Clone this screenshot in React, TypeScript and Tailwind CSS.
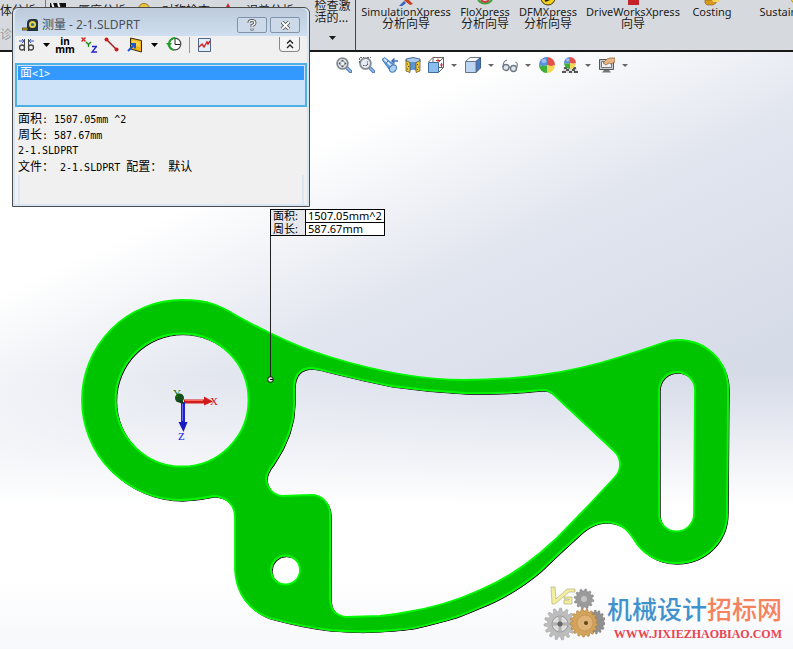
import React, { useState } from "react";

const OUTLINE =
    "M182 300 C194 300 204 301 213 304 C222 307 229 311 237 316 Q253 325 270 333 C286 341 310 351 330 357 C372 370 420 380 465 380 C492 380 517 378 541 375 Q583 369 620 357 Q643 350 665 342 Q671 340 678 340 C706 340 728 361 728 389 L727 513 C727 541 705 563 676 563 C655 563 641 551 635 541 C628 530 622 523 607 522 C599 522 592 524 583 531 Q572 541 560 552 L540 571 C522 586 501 599 480 607 Q457 618 433 623 Q414 629 393 630 Q362 633 330 630 C314 628 300 626 270 618 C249 611 236 593 235 570 L235 517 C235 504 225 496 213 496 Q200 499 182 500 A100 100 0 0 1 182 300 Z";

const HOLES = [
    "M115.500 400 A66.500 66.500 0 0 1 248.500 400 A66.500 66.500 0 0 1 115.500 400 Z",
    "M294 388 C294 374 301 368 312 368 Q320 369 330 372 Q362 380 392 386 Q428 391 465 393 Q505 394 540 390 Q547 389 552 393 L613 450 Q620 456 620 464 Q620 472 615 477 L587 507 L557 538 L540 553 C522 568 502 581 480 590 C456 601 432 608 407 612 Q394 615 380 616 L346 617 Q331 615 330 600 L330 515 C330 503 322 495 311 495 L282 496 C272 495 267 487 266 479 Q266 473 273 464 Q294 433 294 403 Z",
    "M659 390 A18 18 0 0 1 695 390 L694 514 A17.500 17.500 0 0 1 659 514 Z",
    "M271 570 A14.500 14.500 0 0 1 300 570 A14.500 14.500 0 0 1 271 570 Z",
];

const PLATE = [OUTLINE, ...HOLES].join(" ");

function gearPath(cx: number, cy: number, outer: number, inner: number, teeth: number) {
    const points: string[] = [];
    for (let i = 0; i < teeth; i++) {
        const step = (Math.PI * 2) / teeth;
        const base = i * step;
        [[0, inner], [0.2, outer], [0.5, outer], [0.7, inner]].forEach(([offset, radius]) => {
            const angle = base + offset * step;
            points.push(`${(cx + Math.cos(angle) * radius).toFixed(2)} ${(cy + Math.sin(angle) * radius).toFixed(2)}`);
        });
    }
    return `M${points.join(" L")} Z`;
}

function Caret({ className = "" }: { className?: string }) {
    return (
        <svg viewBox="0 0 7 4" className={`w-[7px] h-1 shrink-0 ${className}`}>
            <path d="M0 0h7L3.5 4z" fill="currentColor" />
        </svg>
    );
}

/* ── Ribbon ── */

const sliver: Record<string, React.ReactNode> = {
    sim: (
        <>
            <path d="M1 6l5-5 2 2-5 4z" fill="#2f62c4" />
            <path d="M6 0h5l4 4-3 1-4-3z" fill="#c8401f" />
        </>
    ),
    flo: (
        <>
            <path d="M1 0q7 7 14 0" fill="none" stroke="#3aa53a" strokeWidth="2" />
            <path d="M4 0q4 4 8 0" fill="none" stroke="#d23b3b" strokeWidth="2" />
        </>
    ),
    dfm: (
        <>
            <circle cx="8" cy="-2" r="7" fill="#f2d21c" stroke="#3a3210" />
            <path d="M5 1l5-2" stroke="#222" strokeWidth="2" />
        </>
    ),
    works: <path d="M3 0h11v5H3z" fill="#c4232c" />,
    cost: (
        <>
            <path d="M1 0h11v3l-3 2H3L1 3z" fill="#d79a1c" stroke="#8b5a08" strokeWidth=".6" />
            <path d="M8 0h7v2H9z" fill="#f5cf59" />
        </>
    ),
    sun: <circle cx="11" cy="-2" r="6" fill="#f5dc35" stroke="#b08d18" />,
};

const experts = [
    { icon: "sim", title: "SimulationXpress", subtitle: "分析向导", width: "w-[98px]" },
    { icon: "flo", title: "FloXpress", subtitle: "分析向导", width: "w-[56px]" },
    { icon: "dfm", title: "DFMXpress", subtitle: "分析向导", width: "w-[66px]" },
    { icon: "works", title: "DriveWorksXpress", subtitle: "向导", width: "w-[100px]" },
    { icon: "cost", title: "Costing", width: "w-[54px]" },
    { icon: "sun", title: "Sustainability", width: "w-[106px]" },
];

function Ribbon() {
    return (
        <header className="flex h-[52px] overflow-hidden border-b-2 border-[#1a1a1a] bg-[#d6dadf] text-xs leading-3 text-[#1c1c1c]">
            <div className="w-[46px] shrink-0 border-r border-[#777] pt-[5px] whitespace-nowrap overflow-hidden">
                <div>体分析</div>
                <div className="mt-3 text-[#9b9b9b]">诊断</div>
            </div>
            <div className="flex w-[264px] shrink-0 items-start gap-3 overflow-hidden pt-[3px] pl-1 whitespace-nowrap">
                <svg viewBox="0 0 16 12" className="w-4 h-3 shrink-0">
                    <path d="M0 0h16v12H0z" fill="#111" />
                    <path d="M2 0l4 12M8 0l4 12" stroke="#fff" strokeWidth="2" />
                </svg>
                <span className="pt-[2px]">厚度分析</span>
                <svg viewBox="0 0 12 12" className="w-3 h-3 shrink-0">
                    <circle cx="6" cy="6" r="5.5" fill="#eec643" stroke="#9a7514" />
                </svg>
                <span className="pt-[2px]">对称检查</span>
                <svg viewBox="0 0 12 12" className="w-3 h-3 shrink-0">
                    <path d="M6 0l2 4 4 1-4 2-2 5-2-5-4-2 4-1z" fill="#d2202a" />
                </svg>
                <span className="pt-[2px]">误差分析</span>
            </div>
            <button className="flex w-[46px] shrink-0 flex-col items-center border-r border-[#444] text-left">
                <span>
                    检查激
                    <br />
                    活的...
                </span>
                <Caret className="mt-3" />
            </button>
            {experts.map(expert => (
                <button key={expert.icon} className={`flex ${expert.width} shrink-0 flex-col items-center mx-px whitespace-nowrap`}>
                    <svg viewBox="0 0 16 6" className="w-4 h-[6px] shrink-0">
                        {sliver[expert.icon]}
                    </svg>
                    <span className="text-[11px] leading-3">{expert.title}</span>
                    {expert.subtitle && <span>{expert.subtitle}</span>}
                </button>
            ))}
        </header>
    );
}

/* ── Heads-up view toolbar ── */

function Lens({ area = false }: { area?: boolean }) {
    return (
        <>
            <path d="M10.500 10.500l4 4" stroke="#4672b4" strokeWidth="3.400" strokeLinecap="round" />
            <path d="M10.500 10.500l4 4" stroke="#9cc4ef" strokeWidth="1.500" strokeLinecap="round" />
            <circle cx="6.500" cy="6.500" r="5.400" fill="#e7edf3" stroke="#858b92" strokeWidth="1.800" />
            {area ? (
                <>
                    <path d="M.5 6V.5H5M8 .5h4" fill="none" stroke="#666" strokeDasharray="2 1" />
                    <path d="M4 8.500h4.500V4.500" fill="none" stroke="#555" strokeWidth="1.200" strokeDasharray="1.500 1" />
                </>
            ) : (
                <path d="M6.500 2.500l2 2h-4zM6.500 10.500l2-2h-4zM2.500 6.500l2-2v4zM10.500 6.500l-2-2v4z" fill="#555" />
            )}
        </>
    );
}

function Sphere({ r = 8, cx = 8, cy = 8 }: { r?: number; cx?: number; cy?: number }) {
    return (
        <g transform={`translate(${cx} ${cy}) scale(${r / 8})`}>
            <path d="M0 0V-8A8 8 0 0 0-8 0Q-4 2 0 0z" fill="#5791de" />
            <path d="M0 0V-8A8 8 0 0 1 8 0Q4 2 0 0z" fill="#e2524b" />
            <path d="M0 0Q-4 2-8 0A8 8 0 0 0 0 8z" fill="#3fae3b" />
            <path d="M0 0Q4 2 8 0A8 8 0 0 1 0 8z" fill="#f2d65a" />
            <ellipse cx="-3" cy="-4" rx="2.500" ry="2" fill="#fff" opacity=".45" />
        </g>
    );
}

const viewTools = [
    { name: "整屏显示全图", art: <Lens /> },
    { name: "局部放大", art: <Lens area /> },
    {
        name: "上一视图",
        art: (
            <>
                <path d="M0 2.500L2.500 .5l9.500 7-4 6z" fill="#5f9ce0" stroke="#356ca9" strokeWidth=".8" />
                <path d="M2 2l8 7.500" stroke="#d9ecff" strokeWidth="1.800" />
                <path d="M4 6.500l2.500-3" stroke="#356ca9" />
                <ellipse cx="11" cy="11.500" rx="4" ry="3.200" fill="#a9d0f5" stroke="#3f6fa6" transform="rotate(-50 11 11.500)" />
                <path d="M16 4h-5M12.500 1.500L10 4l2.500 2.500" fill="none" stroke="#3b6dc0" strokeWidth="1.500" />
            </>
        ),
    },
    {
        name: "剖面视图",
        art: (
            <>
                <path d="M1 2q7-3 14 0v3l-4 1q-3-1-6 0L1 4.500z" fill="#a9ccf0" stroke="#2b4c78" strokeWidth=".8" />
                <path d="M5 5.500q3-1 6 0v8q-3-1.500-6 0z" fill="#5b93d4" />
                <path d="M1 3.500l4 2v10l-4-1.500zM15 3.500l-4 2v10l4-1.500z" fill="#f3ca3a" stroke="#4a4a2a" strokeWidth=".7" />
                <path d="M2 7h1M3 9.500h1M2 12h1M12 7.500h1M13 10h1M12 12.500h1" stroke="#5a4a10" />
            </>
        ),
    },
    {
        name: "视图定向",
        caret: true,
        art: (
            <>
                <path d="M5 .5h10.500v10L11 15M5 .5L.5 5M15.500 .5L11 5M5 5V.5M11 10.500h4.500" fill="none" stroke="#555" strokeWidth=".9" />
                <path d="M.5 5.500h10v10H.5z" fill="#8bbcec" stroke="#3d6da5" />
                <path d="M10 1.500v4M8 3.500h4M13.500 6v4M12 8h3" stroke="#d03030" />
            </>
        ),
    },
    {
        name: "显示样式",
        caret: true,
        art: (
            <>
                <path d="M.5 4.500L5 .5h10.500L11 4.500z" fill="#fff" stroke="#66758a" />
                <path d="M11 4.500l4.500-4V11L11 15.500z" fill="#4778c4" stroke="#3c5b90" />
                <path d="M.5 4.500H11v11H.5z" fill="#bcd6f3" stroke="#66758a" />
            </>
        ),
    },
    {
        name: "隐藏/显示项目",
        caret: true,
        art: (
            <>
                <circle cx="4" cy="10.500" r="3" fill="#dbe6ee" stroke="#6d7780" strokeWidth="1.300" />
                <circle cx="11.500" cy="11.500" r="3" fill="#dbe6ee" stroke="#6d7780" strokeWidth="1.300" />
                <path d="M1 10q0-6 4-7M7 10.500q1-1 1.500 0M14.500 11q2-5-1-6" fill="none" stroke="#6d7780" strokeWidth="1.100" />
            </>
        ),
    },
    { name: "编辑外观", art: <Sphere /> },
    {
        name: "应用布景",
        caret: true,
        art: (
            <>
                <path d="M2 10h12l2 6H0z" fill="#ddd" />
                <path d="M2 10h3v2H2zM4 12h3v2H4zM10 12h3v2h-3zM0 14h4v2H0zM12 14h4v2h-4zM11 10h3v2h-3zM7 14h3v2H7z" fill="#555" />
                <Sphere r={6} cx={8} cy={6} />
            </>
        ),
    },
    {
        name: "视图设定",
        caret: true,
        art: (
            <>
                <path d="M.5 2.500h14v10H.5z" fill="#c9ced4" stroke="#555" />
                <path d="M2.500 4.500h10v6h-10z" fill="#eef2f5" stroke="#777" />
                <path d="M5 13h5l2 2.500H3z" fill="#777" />
                <path d="M4 6l4-4 3-1h5v4l-4 2-2-1-3 2z" fill="#e6b583" stroke="#8b5f34" strokeWidth=".7" />
            </>
        ),
    },
];

function ViewToolbar() {
    return (
        <div className="absolute top-[5px] left-[336px] flex items-center">
            {viewTools.map(tool => (
                <React.Fragment key={tool.name}>
                    <button aria-label={tool.name} className="mr-[7px] h-4 w-4 shrink-0">
                        <svg viewBox="0 0 16 16" className="w-4 h-4">
                            {tool.art}
                        </svg>
                    </button>
                    {tool.caret && (
                        <button aria-label={`${tool.name} 菜单`} className="mr-2 flex h-4 items-center text-[#666]">
                            <svg viewBox="0 0 6 3" className="w-[6px] h-[3px]">
                                <path d="M0 0h6L3 3z" fill="currentColor" />
                            </svg>
                        </button>
                    )}
                </React.Fragment>
            ))}
        </div>
    );
}

/* ── Part model ── */

function Model() {
    return (
        <svg viewBox="0 52 793 597" className="block w-full">
            <path d={PLATE} transform="translate(1.200 1.200)" fill="#111" stroke="#111" fillRule="evenodd" />
            <path d={PLATE} transform="translate(.500 .500)" fill="#8a8a8a" stroke="#8a8a8a" fillRule="evenodd" />
            <path d={PLATE} fill="#00c400" stroke="#00fa00" strokeWidth="1.800" strokeLinejoin="round" fillRule="evenodd" />

            {/* leader from the callout to the picked face */}
            <path d="M270.500 235V377" stroke="#222" />
            <circle cx="270.500" cy="379.500" r="2.800" fill="#e8e8e8" stroke="#111" />
            <path d="M270 379.500h3" stroke="#111" />

            {/* origin triad */}
            <path d="M184 401.500h21" stroke="#d01c1c" strokeWidth="4" />
            <path d="M204 396.500l9 5-9 4z" fill="#d01c1c" />
            <path d="M185 400.500h18" stroke="#ff6b5e" />
            <path d="M183 402v20" stroke="#2020cc" strokeWidth="4" />
            <path d="M178.500 422h9l-4 10z" fill="#1a1ac0" />
            <path d="M182.500 403v18" stroke="#6a6af5" />
            <circle cx="179.500" cy="398" r="4.500" fill="#15501a" />
            <path d="M178 400l5 1v3l-3-1z" fill="#123f18" />
            <g className="font-['Liberation_Serif',serif] text-[11px]">
                <text x="173" y="397" fill="#0a7a0a">Y</text>
                <text x="210" y="405" fill="#e01010">X</text>
                <text x="178" y="440" fill="#1010f0">Z</text>
            </g>
        </svg>
    );
}

function Callout() {
    return (
        <table className="absolute top-[157px] left-[270px] border-collapse border border-black bg-white font-['Noto_Sans','Noto_Sans_CJK_SC',sans-serif] text-[11px] leading-3 text-black">
            <tbody>
                <tr>
                    <th className="w-[35px] bg-[#e6e8ec] pl-[2px] text-left font-normal whitespace-nowrap">面积:</th>
                    <td className="w-[79px] border border-black pl-[2px]">1507.05mm^2</td>
                </tr>
                <tr>
                    <th className="bg-[#e6e8ec] pl-[2px] text-left font-normal whitespace-nowrap">周长:</th>
                    <td className="border border-black pl-[2px]">587.67mm</td>
                </tr>
            </tbody>
        </table>
    );
}

function Watermark() {
    return (
        <div className="absolute right-[11px] bottom-[7px] flex items-end gap-[2px]">
            <svg viewBox="0 0 62 56" className="w-[62px] h-14">
                <path d={gearPath(41, 13, 10, 8, 12)} fill="#9a9a9a" stroke="#7b7b7b" strokeWidth=".5" />
                <circle cx="41" cy="13" r="3" fill="#c4c4c4" />
                <path d={gearPath(51, 36, 12, 10, 14)} fill="#8f8f8f" stroke="#777" strokeWidth=".5" transform="translate(12 0) scale(.8 1)" />
                <path d={gearPath(17, 38, 16, 12.5, 15)} fill="#bdbdbd" stroke="#a2a2a2" strokeWidth=".6" />
                <circle cx="17" cy="38" r="8" fill="#dcdcdc" stroke="#999" />
                <path d="M17 30v16M9 38h16" stroke="#b0b0b0" strokeWidth="3" />
                <circle cx="17" cy="38" r="2.500" fill="#666" />
                <path d={gearPath(41, 37, 14, 12, 17)} fill="#d3a35c" stroke="#a87c3c" strokeWidth=".6" />
                <circle cx="42" cy="37" r="8" fill="#dfb375" stroke="#b98a49" strokeWidth=".6" />
                <circle cx="43" cy="37" r="2" fill="#604520" />
                <path d="M8 1h4l1 12L24 3h8v3h-6L12 18H9zM21 11h8v7h-8v-4h5v-1h-5z" fill="#f3eda0" stroke="#aaa676" strokeWidth=".6" />
            </svg>
            <div className="flex flex-col items-end">
                <div className="font-['Noto_Sans_CJK_SC',sans-serif] text-[25px] leading-9 font-medium text-[#3f92cd]">
                    机械设计<span className="text-[#f5825c]">招标网</span>
                </div>
                <a href="#" className="font-['Liberation_Serif',serif] text-xs leading-4 font-bold text-[#ea4350]">
                    WWW.JIXIEZHAOBIAO.COM
                </a>
            </div>
        </div>
    );
}

/* ── Measure dialog ── */

function MeasureDialog() {
    const [open, setOpen] = useState(true);
    const [expanded, setExpanded] = useState(true);

    if (!open) return null;

    return (
        <section
            aria-label="测量"
            className="absolute top-[7px] left-3 w-[298px] rounded-t-md border border-[#4b4b4b] bg-[#d8e5f3] px-[2px] pb-[2px]"
        >
            <div className="flex h-7 items-center rounded-t-md bg-linear-to-b from-[#bccada] to-[#cfdff0] pt-[6px] pr-[7px] pl-[7px]">
                <svg viewBox="0 0 16 12" className="mr-1 w-4 h-3">
                    <path d="M5 4q0-4 5-4h3q3 0 3 3v9H5z" fill="#26323a" />
                    <circle cx="10.500" cy="5.500" r="3.500" fill="#e5d44a" />
                    <circle cx="10.500" cy="5.500" r="1.600" fill="#2f6b87" />
                    <path d="M0 9h6v2H0z" fill="#d9b400" stroke="#222" strokeWidth=".7" />
                </svg>
                <h1 className="flex-1 text-xs text-[#4a4f55]">测量 - 2-1.SLDPRT</h1>
                <button aria-label="帮助" className="mr-[3px] flex h-4 w-[30px] items-center justify-center rounded-xs border border-[#8193aa] bg-[#cbd9e8]">
                    <svg viewBox="0 0 10 12" className="h-3 w-[10px]" fill="none">
                        <path d="M2 4q0-2.500 3-2.500T8 4Q8 5.500 5 6.500V8M5 9.500v2" stroke="#555" strokeWidth="3" />
                        <path d="M2 4q0-2.500 3-2.500T8 4Q8 5.500 5 6.500V8M5 9.500v1.500" stroke="#fff" strokeWidth="1.200" />
                    </svg>
                </button>
                <button aria-label="关闭" onClick={() => setOpen(false)} className="flex h-4 w-[30px] items-center justify-center rounded-xs border border-[#8193aa] bg-[#cbd9e8]">
                    <svg viewBox="0 0 11 9" className="w-[11px] h-[9px]">
                        <path d="M2 1l7 7M9 1L2 8" stroke="#555" strokeWidth="3.600" />
                        <path d="M2 1l7 7M9 1L2 8" stroke="#fff" strokeWidth="1.800" />
                    </svg>
                </button>
            </div>

            <div className="bg-[#f0f0f0]">
                <div className="flex h-[27px] items-start pt-px pr-[7px] pl-1">
                    <button aria-label="圆弧/圆测量" className="mr-2 h-4 w-4">
                        <svg viewBox="0 0 16 16" className="w-4 h-4">
                            <path d="M5.500 2v12M9.500 2v12" stroke="#444" />
                            <circle cx="3" cy="10.500" r="2.500" fill="none" stroke="#444" strokeWidth="1.300" />
                            <circle cx="12" cy="10.500" r="2.500" fill="none" stroke="#444" strokeWidth="1.300" />
                            <path d="M0 4h5M15 4h-5M3 2l2 2-2 2M12 2l-2 2 2 2" fill="none" stroke="#2f55d4" />
                        </svg>
                    </button>
                    <Caret className="mt-[6px]" />
                    <button aria-label="单位" className="ml-[7px] flex h-4 w-4 flex-col items-center text-[10px] leading-2 font-bold text-black">
                        <span>in</span>
                        <span>mm</span>
                    </button>
                    <button aria-label="显示 XYZ 测量" className="ml-2 h-4 w-4">
                        <svg viewBox="0 0 16 16" className="w-4 h-4" fill="none" strokeWidth="1.300">
                            <path d="M.5 .5l4 4M4.500 .5l-4 4" stroke="#d02020" />
                            <path d="M5 5l2.500 2.500L10 5M7.500 7.500V10" stroke="#168a16" />
                            <path d="M11 9.500h4.500L11 15h5" stroke="#2424c8" />
                        </svg>
                    </button>
                    <button aria-label="点到点" className="ml-[7px] h-4 w-4">
                        <svg viewBox="0 0 16 16" className="w-4 h-4">
                            <path d="M2 2l11 11" stroke="#a01818" strokeWidth="1.400" />
                            <circle cx="2.500" cy="2.500" r="2" fill="#d01a1a" />
                            <circle cx="12.500" cy="12.500" r="2" fill="#d01a1a" />
                        </svg>
                    </button>
                    <button aria-label="投影于" className="ml-[7px] h-4 w-4">
                        <svg viewBox="0 0 16 16" className="w-4 h-4">
                            <path d="M3.500 1l11 2.500v11.500L3.500 12z" fill="#f2b316" stroke="#3a2c05" />
                            <path d="M5 3l8 2v5L5 8z" fill="#fcd24d" />
                            <path d="M1 14l7-7M3.500 7h4.500v4.500" fill="none" stroke="#1c56c8" strokeWidth="2" />
                        </svg>
                    </button>
                    <Caret className="mt-[6px] ml-2" />
                    <button aria-label="测量历史记录" className="ml-2 h-4 w-4">
                        <svg viewBox="0 0 16 16" className="w-4 h-4">
                            <circle cx="9" cy="7" r="5.800" fill="#fff" stroke="#444" strokeWidth="1.200" />
                            <path d="M9 2v5.500h5" fill="none" stroke="#222" />
                            <path d="M9 1A6 6 0 0 0 3 7q0 5 5 6" fill="none" stroke="#1fa02a" strokeWidth="2" />
                            <path d="M0 6h6L3 10z" fill="#1fa02a" />
                        </svg>
                    </button>
                    <div className="mx-[7px] h-4 w-px bg-[#999]" />
                    <button aria-label="创建传感器" className="h-4 w-4">
                        <svg viewBox="0 0 16 16" className="w-4 h-4">
                            <path d="M1.500 1.500h12v13h-12z" fill="#e4eef8" stroke="#4d6688" />
                            <path d="M2 10l3-3 2 3 3-5 1 2 2-3" fill="none" stroke="#d8201c" strokeWidth="1.400" />
                        </svg>
                    </button>
                    <button
                        aria-label="展开/折叠"
                        onClick={() => setExpanded(!expanded)}
                        className="ml-auto flex h-[15px] w-[21px] items-center justify-center rounded-b-sm border border-t-0 border-[#888] bg-[#f4f4f4]"
                    >
                        <svg viewBox="0 0 8 10" className="w-2 h-[10px]">
                            <path d="M1 4.500l3-3 3 3M1 9l3-3 3 3" fill="none" stroke="#222" strokeWidth="1.300" />
                        </svg>
                    </button>
                </div>

                <ul className="h-11 border-2 border-[#4fb0e6] bg-[#cfe3f8] p-px">
                    <li className="h-[14px] bg-[#3399ff] pl-[2px] leading-[14px] text-white font-['DejaVu_Sans_Mono','Noto_Sans_CJK_SC',monospace] text-[10px]">
                        <span className="text-xs leading-[14px]">面</span>&lt;1&gt;
                    </li>
                </ul>

                {expanded && (
                    <div className="h-[97px] pt-1 pl-[3px] font-['DejaVu_Sans_Mono','Noto_Sans_CJK_SC',monospace] text-[10px] leading-4 whitespace-pre text-black">
                        <p className="h-4"><span className="text-xs leading-4">面积</span>: 1507.05mm ^2</p>
                        <p className="h-4"><span className="text-xs leading-4">周长</span>: 587.67mm</p>
                        <p className="h-4">2-1.SLDPRT</p>
                        <p className="h-4">
                            <span className="text-xs leading-4">文件：</span> 2-1.SLDPRT <span className="text-xs leading-4">配置：</span> <span className="text-xs leading-4">默认</span>
                        </p>
                        <div className="mr-[3px] h-[29px] border-x-2 border-[#dbe7f4]" />
                    </div>
                )}
            </div>
        </section>
    );
}

export default function App() {
    return (
        <div className="relative flex min-h-screen flex-col overflow-hidden bg-white font-['Noto_Sans','Noto_Sans_CJK_SC',sans-serif]">
            <Ribbon />
            <main className="relative flex-1 bg-[linear-gradient(to_bottom,rgba(255,255,255,0)_0%,rgba(255,255,255,0)_54%,#ffffff_76%,#ffffff_88%,#f7f8fb_100%),linear-gradient(155deg,#ffffff_0%,#ffffff_25%,#e2e6ef_44%,#d6dbe8_68%)]">
                <Model />
                <ViewToolbar />
                <Callout />
                <Watermark />
            </main>
            <MeasureDialog />
        </div>
    );
}
